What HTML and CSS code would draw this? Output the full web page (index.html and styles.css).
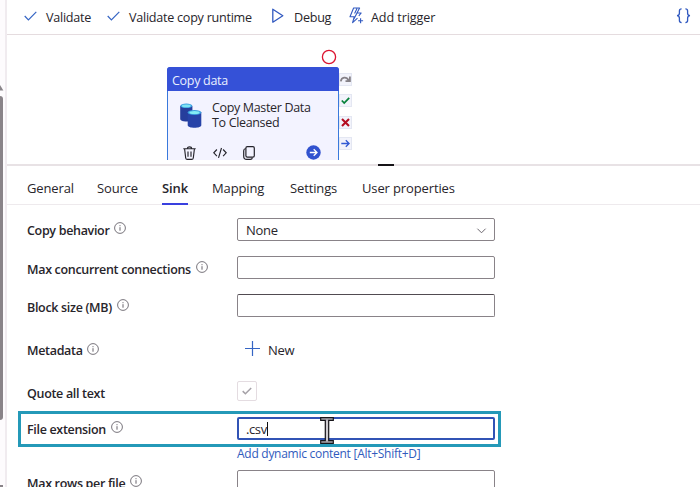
FILE: index.html
```html
<!DOCTYPE html>
<html lang="en">
<head>
<meta charset="utf-8">
<title>Copy data pipeline</title>
<link rel="stylesheet" href="styles.css">
</head>
<body>
<svg width="0" height="0" class="defs">
  <symbol id="info" viewBox="0 0 12 12"><circle cx="6" cy="6" r="5.4" fill="none" stroke="#55505a" stroke-width=".8"/><path d="M6 5.2V8.7M6 3.2V4.2" stroke="#55505a" stroke-width=".9"/></symbol>
  <symbol id="tick" viewBox="0 0 13 10"><path d="M.7 5L4.4 8.8L12.3.8" fill="none" stroke="#3565c4" stroke-width="1.2"/></symbol>
</svg>
<div class="app">
  <aside class="rail">
    <svg class="rail-arrow" width="4" height="6" viewBox="0 0 4 6"><path d="M0 0L3.4 5.5H0z" fill="#8a858a"/></svg>
    <div class="thumb"></div>
    <div class="rail-end"></div>
  </aside>
  <main class="main">
    <header class="toolbar">
      <button class="tool validate"><svg width="13" height="10"><use href="#tick"/></svg><span>Validate</span></button>
      <button class="tool runtime"><svg width="13" height="10"><use href="#tick"/></svg><span>Validate copy runtime</span></button>
      <button class="tool debug"><svg width="12" height="16" viewBox="0 0 12 16"><path d="M.8 1.2V14.2L10.8 7.7z" fill="none" stroke="#3159c0" stroke-width="1.3" stroke-linejoin="round"/></svg><span>Debug</span></button>
      <button class="tool trigger"><svg width="15" height="17" viewBox="0 0 15 17"><path d="M8.5 11.2L3.6 15.7L5.2 9.8H1L4.6 1H10.6L8 6H12.2L9.8 8.9M8 1.5L5.6 6.6M8 6L4.9 12" fill="none" stroke="#3159c0" stroke-width="1.1" stroke-linejoin="round"/><path d="M11.6 11.2V16.2M9.1 13.7H14.1" stroke="#3159c0" stroke-width="1.1"/></svg><span>Add trigger</span></button>
      <svg class="braces" width="15" height="16" viewBox="0 0 15 16"><path d="M5.6.9C3.8.9 3.4 1.5 3.4 3V5.2C3.4 6.8 2.6 7.6 1 7.7C2.6 7.8 3.4 8.6 3.4 10.2V12.5C3.4 14 3.8 14.6 5.6 14.6M9.4.9C11.2.9 11.6 1.5 11.6 3V5.2C11.6 6.8 12.4 7.6 14 7.7C12.4 7.8 11.6 8.6 11.6 10.2V12.5C11.6 14 11.2 14.6 9.4 14.6" fill="none" stroke="#3159c0" stroke-width="1.3"/></svg>
    </header>
    <section class="canvas">
      <div class="node">
        <div class="node-title">Copy data</div>
        <div class="node-body">
          <svg width="22" height="25" viewBox="0 0 22 25"><path d="M.2 3V15.8C.2 17.6 3 18.6 6.3 18.6S12.4 17.6 12.4 15.8V3z" fill="#263e9c"/><ellipse cx="6.3" cy="2.8" rx="6" ry="2.3" fill="#3c9fe0"/><ellipse cx="6.3" cy="2.9" rx="4.5" ry="1.4" fill="#7de3f3"/><path d="M7.7 9V22C7.7 23.8 10.8 24.8 14.5 24.8S21.3 23.8 21.3 22V9z" fill="#2743a8"/><ellipse cx="14.5" cy="9.4" rx="6.8" ry="2.5" fill="#3c9fe0"/><ellipse cx="14.5" cy="9.5" rx="5.1" ry="1.5" fill="#83edf5"/></svg>
          <div class="node-name">Copy Master Data<br>To Cleansed</div>
        </div>
        <div class="node-actions">
          <svg width="13" height="14" viewBox="0 0 13 14"><path d="M.3 2.7H12.7M4.4 2.5C4.4.3 8.6.3 8.6 2.5M1.6 3L2.7 12C2.9 13.1 3.3 13.4 4.3 13.4H8.7C9.7 13.4 10.1 13.1 10.3 12L11.4 3M5 5.4V10.8M8 5.4V10.8" fill="none" stroke="#24232b" stroke-width="1.15"/></svg>
          <svg width="14" height="12" viewBox="0 0 14 12"><path d="M3.9 2.5L.8 5.8L3.9 9.1M10.1 2.5L13.2 5.8L10.1 9.1M8.5 1L5.5 10.8" fill="none" stroke="#24232b" stroke-width="1.15"/></svg>
          <svg width="12" height="14" viewBox="0 0 12 14"><rect x="2.9" y=".6" width="8.4" height="10.6" rx="1.4" fill="none" stroke="#24232b" stroke-width="1.2"/><path d="M2.7 2.5C1.3 2.7.7 3.3.7 4.7V10.2C.7 12.4 1.7 13.4 3.8 13.4H7.2C8.5 13.4 9.2 12.8 9.4 11.6" fill="none" stroke="#24232b" stroke-width="1.2"/></svg>
          <svg class="go" width="15" height="15" viewBox="0 0 15 15"><circle cx="7.5" cy="7.5" r="7.2" fill="#3152cf"/><path d="M3.8 7.5H11M7.7 4.3L11 7.5L7.7 10.7" fill="none" stroke="#fff" stroke-width="1.3"/></svg>
        </div>
      </div>
      <div class="ports">
        <svg class="ring" width="16" height="16" viewBox="0 0 16 16"><circle cx="8" cy="8" r="6.6" fill="none" stroke="#dc1430" stroke-width="1.3"/></svg>
        <div class="port"><svg width="11" height="11" viewBox="0 0 11 11"><path d="M.8 7.4C1.5 2.8 6.5 2.4 8.6 6.4M9.9 2.4V7.2H5.5" fill="none" stroke="#858187" stroke-width="1.8"/></svg></div>
        <div class="port"><svg width="11" height="11" viewBox="0 0 11 11"><path d="M1.8 5.5L4.2 8L9.2 2.8" fill="none" stroke="#08823b" stroke-width="1.8"/></svg></div>
        <div class="port"><svg width="11" height="11" viewBox="0 0 11 11"><path d="M2 2L9 9M9 2L2 9" fill="none" stroke="#b40d20" stroke-width="2.1"/></svg></div>
        <div class="port"><svg width="11" height="11" viewBox="0 0 11 11"><path d="M1.3 5.5H9M5.8 2.2L9.1 5.5L5.8 8.8" fill="none" stroke="#3159d3" stroke-width="1.3"/></svg></div>
      </div>
    </section>
    <div class="splitter"><i></i></div>
    <nav class="tabs">
      <a class="t1"><span>General</span></a><a class="t2"><span>Source</span></a><a class="t3 active"><span>Sink</span></a><a class="t4"><span>Mapping</span></a><a class="t5"><span>Settings</span></a><a class="t6"><span>User properties</span></a>
    </nav>
    <section class="form">
      <div class="row copy"><label><span>Copy behavior</span><svg><use href="#info"/></svg></label><div class="field select"><span>None</span><svg width="9" height="6" viewBox="0 0 9 6"><path d="M.4.7L4.5 4.8L8.6.7" fill="none" stroke="#6b666e"/></svg></div></div>
      <div class="row"><label><span>Max concurrent connections</span><svg><use href="#info"/></svg></label><div class="field"></div></div>
      <div class="row block"><label><span>Block size (MB)</span><svg><use href="#info"/></svg></label><div class="field dark"></div></div>
      <div class="row meta"><label><span>Metadata</span><svg><use href="#info"/></svg></label><div class="new"><svg width="15" height="15" viewBox="0 0 15 15"><path d="M7.5 0V15M0 7.5H15" stroke="#3565c4" stroke-width="1.2"/></svg><span>New</span></div></div>
      <div class="row quote"><label><span>Quote all text</span></label><div class="check"><svg width="10" height="8" viewBox="0 0 10 8"><path d="M.7 4.1L3.4 6.8L9.2 1" fill="none" stroke="#a5a1a7" stroke-width="1.5"/></svg></div></div>
      <div class="row extension"><label><span>File extension</span><svg><use href="#info"/></svg></label><div class="field focus"><span>.csv</span><i class="caret"></i></div>
        <svg class="pointer" width="14" height="27" viewBox="0 0 14 27"><path d="M.7.7H13.3V3.3H8.7V23.7H13.3V26.3H.7V23.7H5.3V3.3H.7z" fill="#aaa6ad" stroke="#17151a" stroke-width="1.2"/><path d="M7 3.5V23.5" stroke="#f4f2f4"/></svg></div>
      <a class="dynamic"><span>Add dynamic content [Alt+Shift+D]</span></a>
      <div class="row"><label><span>Max rows per file</span><svg><use href="#info"/></svg></label><div class="field"></div></div>
    </section>
  </main>
</div>
</body>
</html>
```
FILE: styles.css
```css
*, *::before { box-sizing: border-box; }
body { margin: 0; overflow: hidden; background: #fff; color: #28252b; font: 13px/18px "Open Sans", "Noto Sans", sans-serif; letter-spacing: -.25px; }
svg { display: block; flex: none; overflow: visible; }
.defs { position: absolute; }
.app { display: grid; grid-template-columns: 7px 693px; height: 487px; overflow: hidden; }
.rail { border-right: 2px solid #f0ebef; background: #fdfbfd; display: flex; flex-direction: column; padding-top: 85px; }
.thumb { width: 3px; height: 324px; margin-top: 5px; background: #898388; border-radius: 0 3px 3px 0; }
.rail-end { width: 3px; height: 2px; margin-top: 65px; background: #898388; }
.main { display: flex; flex-direction: column; min-width: 0; }
.toolbar { display: flex; align-items: center; height: 35px; flex: none; border-bottom: 1px solid #e5dcdf; padding-left: 17px; }
.tool { display: flex; align-items: center; padding: 0; border: 0; background: none; font: inherit; font-size: 12.6px; letter-spacing: -.26px; color: inherit; white-space: nowrap; height: 34px; }
.tool span { padding-top: 2px; }
.tool > svg { margin-top: -3px; }
.validate { gap: 9px; width: 83px; }
.runtime { gap: 9px; width: 165px; }
.debug { gap: 10px; width: 77px; }
.trigger { gap: 7px; letter-spacing: -.1px; }
.braces { margin: -3px 9px 0 auto; }
.canvas { height: 125px; flex: none; display: flex; overflow: hidden; padding-left: 160px; }
.node { width: 172px; height: 110px; margin-top: 32px; border: 1px solid #3979dc; background: #f3f3ff; border-radius: 3px 3px 0 0; }
.node-title { height: 24px; margin: -1px -1px 0; padding: 5px 5px 0; background: #3551d7; color: #e9f0ff; border-radius: 3px 3px 0 0; font-size: 12.5px; letter-spacing: -.3px; }
.node-body { display: flex; gap: 10px; padding: 12px 0 0 12px; height: 50px; }
.node-name { font-size: 12.5px; letter-spacing: -.34px; line-height: 14.5px; white-space: nowrap; margin-top: -2px; }
.node-actions { display: flex; align-items: center; padding: 0 17px 0 15px; height: 23px; gap: 16.5px; }
.go { margin-left: auto; }
.ports { width: 12px; margin-top: 15px; margin-left: 1px; }
.ring { margin: -1px 0 9px -19px; }
.port { width: 11px; height: 11px; margin-bottom: 10.3px; background: #f2f3fb; outline: 1px solid #e4e7f2; }
.splitter { height: 6px; flex: none; border-bottom: 2px solid #e8e2e5; position: relative; }
.splitter i { position: absolute; left: 371px; top: 4px; width: 16px; height: 2px; background: #161418; }
.tabs { display: flex; height: 39px; flex: none; border-bottom: 1px solid #eeeaed; padding-left: 20px; gap: 24px; letter-spacing: -.13px; }
.tabs a { height: 39px; padding-top: 13px; white-space: nowrap; }
.t1 { width: 46px; }
.t2 { width: 41px; }
.t3 { width: 26px; }
.t4 { width: 54px; }
.t5 { width: 48px; }
.tabs .active { font-weight: 600; border-bottom: 2px solid #3940df; }
.form { padding: 13px 0 0 20px; }
.row { display: grid; grid-template-columns: 210px 258px; align-items: center; height: 24px; margin-bottom: 14px; position: relative; }
label { display: flex; align-items: center; gap: 5px; font-weight: 600; font-size: 12.5px; letter-spacing: -.32px; white-space: nowrap; padding-top: 3px; }
.copy label, .meta label { padding-top: 1px; }
.extension label, .quote label { padding-top: 2px; }
label svg { width: 12px; height: 12px; margin-top: -6px; }
.meta label svg { margin-top: -3px; }
.meta label { gap: 4px; }
.field { width: 258px; height: 23px; border: 1px solid #898388; border-radius: 2px; display: flex; align-items: center; padding: 0 8px; align-self: start; }
.dark { border-top-color: #514b51; }
.select span { padding-top: 1px; }
.select svg { margin-left: auto; margin-top: 3px; }
.block { margin-bottom: 20px; }
.meta { margin-bottom: 19px; }
.new { display: flex; align-items: center; gap: 8px; padding-left: 8px; }
.new svg { margin-top: -4px; }
.quote { margin-bottom: 12px; }
.check { width: 20px; height: 20px; border: 1px solid #e4dce1; border-radius: 2px; display: grid; place-items: center; align-self: start; }
.extension { margin-bottom: 4px; }
.extension::before { content: ""; position: absolute; left: -9px; top: -6px; width: 483px; height: 36px; border: 3px solid #2499b8; }
.focus { border: 2px solid #3153b5; padding-left: 7px; letter-spacing: -.4px; }
.caret { width: 1px; height: 14px; background: #111; }
.pointer { position: absolute; left: 293px; top: 0; }
.dynamic { display: block; width: 220px; margin-left: 210px; height: 18px; margin-bottom: 7px; font-size: 12px; letter-spacing: -.27px; color: #315bbd; white-space: nowrap; }
```
